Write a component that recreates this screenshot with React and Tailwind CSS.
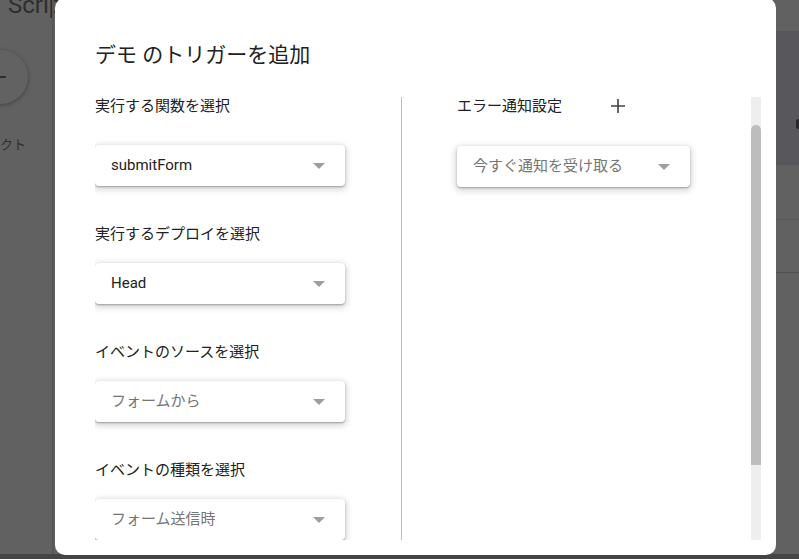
import React from 'react';

const FONT = { fontFamily: 'Roboto, "Noto Sans CJK JP", "Noto Sans", sans-serif' };

// Small grey caret used in the select boxes
const Caret = () => (
  <svg width="12" height="6" viewBox="0 0 12 6" className="shrink-0">
    <path d="M0 0 L12 0 L6 6 Z" fill="#9e9e9e" />
  </svg>
);

const SelectBox = ({ value, muted = false, width = 'w-[250px]' }) => (
  <div
    className={`${width} h-[41px] flex items-center justify-between pl-4 pr-5 bg-white rounded-[4px] shadow-[0_1px_2px_rgba(0,0,0,0.3),0_2px_6px_2px_rgba(0,0,0,0.15)]`}
  >
    <span className={`text-[15px] ${muted ? 'text-[#757575]' : 'text-[#212121]'}`}>{value}</span>
    <Caret />
  </div>
);

const Field = ({ label, value, muted, space = 'mt-[19px]' }) => (
  <div className="flex flex-col shrink-0">
    <div className="h-[20px] leading-[20px] text-[15px] text-[#212121]">{label}</div>
    <div className={space}>
      <SelectBox value={value} muted={muted} />
    </div>
  </div>
);

// Backdrop: the Apps Script page dimmed behind the dialog
const Backdrop = () => (
  <div className="absolute inset-0 bg-[#616161]">
    <div className="absolute left-[8px] top-[-13px] text-[24px] text-[#2e2e2e]">Script</div>
    <div className="absolute left-[-26px] top-[50px] w-[54px] h-[54px] rounded-full bg-[#626262] shadow-[0_1px_4px_rgba(0,0,0,0.35)] flex items-center justify-end pr-[22px]">
      <div className="w-[6px] h-[2px] bg-[#2e2e2e]" />
    </div>
    <div className="absolute left-[0px] top-[135px] text-[13px] text-[#2e2e2e]">クト</div>
    <div className="absolute left-[52px] top-0 bottom-0 w-[2px] bg-[#575757]" />
    <div className="absolute left-[776px] right-0 top-[31px] h-[134px] bg-[#58585c]" />
    <div className="absolute left-[796px] top-[119px] w-[4px] h-[10px] rounded-full bg-[#2a2a2a]" />
    <div className="absolute left-[776px] right-0 top-[219px] h-[1px] bg-[#575757]" />
    <div className="absolute left-[776px] right-0 top-[272px] h-[1px] bg-[#4e4e4e]" />
    <div className="absolute left-0 right-0 bottom-0 h-[5px] bg-[#454545]" />
  </div>
);

export default function App() {
  return (
    <div className="relative w-[799px] h-[559px] overflow-hidden" style={FONT}>
      <Backdrop />
      <div className="absolute left-[55px] top-[-2px] w-[721px] h-[557px] bg-white rounded-[10px] flex flex-col pl-[40px] pr-[15px] pt-[42px] pb-[15px]">
        <h1 className="h-[30px] leading-[30px] text-[21px] text-[#212121]">デモ のトリガーを追加</h1>
        <div className="mt-[26px] flex flex-1 min-h-0 overflow-hidden">
          {/* left column */}
          <div className="w-[306px] flex flex-col gap-[38px] overflow-hidden">
            <Field label="実行する関数を選択" value="submitForm" space="mt-[29px]" />
            <Field label="実行するデプロイを選択" value="Head" />
            <Field label="イベントのソースを選択" value="フォームから" muted />
            <Field label="イベントの種類を選択" value="フォーム送信時" muted />
          </div>
          <div className="w-px bg-[#bdbdbd] mt-[1px]" />
          {/* right column */}
          <div className="flex-1 pl-[55px] flex flex-col">
            <div className="h-[20px] flex items-center">
              <span className="text-[15px] text-[#212121]">エラー通知設定</span>
              <svg width="14" height="14" viewBox="0 0 14 14" className="ml-[49px]">
                <path d="M7 0 V14 M0 7 H14" stroke="#424242" strokeWidth="1.6" />
              </svg>
            </div>
            <div className="mt-[30px]">
              <SelectBox value="今すぐ通知を受け取る" muted width="w-[233px]" />
            </div>
          </div>
          {/* scrollbar */}
          <div className="w-[10px] bg-[#eeeeee] mt-[1px] flex flex-col">
            <div className="h-[28px]" />
            <div className="h-[340px] bg-[#bdbdbd] rounded-t-[5px]" />
          </div>
        </div>
      </div>
    </div>
  );
}
